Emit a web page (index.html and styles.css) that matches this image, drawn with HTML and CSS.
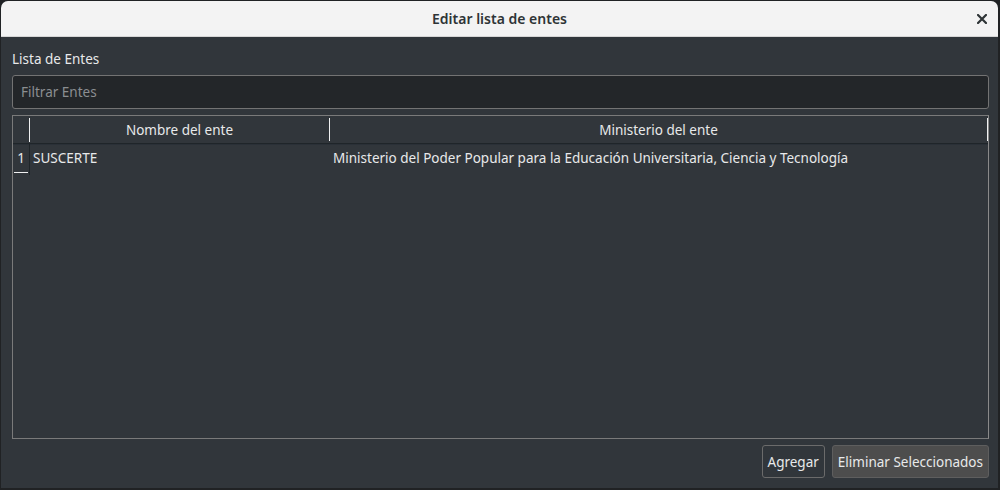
FILE: index.html
```html
<!DOCTYPE html>
<html lang="es">
<head>
<meta charset="utf-8">
<title>Editar lista de entes</title>
<link rel="stylesheet" href="styles.css">
</head>
<body>
<div class="window">
  <div class="titlebar">
    <span class="title">Editar lista de entes</span>
    <span class="close">
      <svg width="10" height="10" viewBox="0 0 10 10"><path d="M1 1L9 9M9 1L1 9" stroke="#2e3436" stroke-width="2.2" stroke-linecap="square"/></svg>
    </span>
  </div>
  <div class="content">
    <div class="label">Lista de Entes</div>
    <div class="filter">Filtrar Entes</div>
    <div class="table">
      <div class="thead">
        <div class="corner"></div>
        <div class="th th-name">Nombre del ente</div>
        <div class="th th-min">Ministerio del ente</div>
      </div>
      <div class="row">
        <div class="rownum"><span>1</span></div>
        <div class="td td-name">SUSCERTE</div>
        <div class="td td-min">Ministerio del Poder Popular para la Educación Universitaria, Ciencia y Tecnología</div>
      </div>
    </div>
    <div class="actions">
      <button class="btn">Agregar</button>
      <button class="btn btn-alt">Eliminar Seleccionados</button>
    </div>
  </div>
</div>
</body>
</html>
```

FILE: styles.css
```css
html, body {
  margin: 0;
  padding: 0;
  background: #202224;
  font-family: "Noto Sans", "DejaVu Sans", sans-serif;
}
.window {
  margin: 1px 2px 0 1px;
  height: 487px;
  display: flex;
  flex-direction: column;
  background: #31363b;
  border-radius: 7px 7px 0 0;
  overflow: hidden;
}
.titlebar {
  height: 35px;
  background: #f3f3f3;
  border-bottom: 1px solid #d6d6d6;
  display: flex;
  align-items: center;
  justify-content: center;
  position: relative;
  flex: none;
}
.title {
  font-size: 14px;
  font-weight: 600;
  color: #2e3436;
}
.close {
  position: absolute;
  right: 11px;
  top: 13px;
  width: 10px;
  height: 10px;
  display: flex;
}
.content {
  flex: 1;
  display: flex;
  flex-direction: column;
  padding: 13px 9px 10px 11px;
  color: #e8e9ea;
  font-size: 13.5px;
}
.label {
  height: 25px;
  line-height: 18px;
}
.filter {
  height: 32px;
  border: 1px solid #737373;
  border-radius: 3px;
  background: #232629;
  color: #8b8e91;
  padding-left: 8px;
  line-height: 32px;
  margin-bottom: 6px;
}
.table {
  height: 322px;
  border: 1px solid #7a7a7a;
  border-right-color: #8a8a8a;
  display: flex;
  flex-direction: column;
}
.thead {
  height: 27px;
  display: flex;
  border-bottom: 1px solid #1f2529;
  box-shadow: 0 1px 0 #2a3037;
}
.corner {
  width: 16px;
  border-right: 1px solid #eff0f1;
  margin: 2px 0 1px 0;
}
.th {
  display: flex;
  align-items: center;
  justify-content: center;
  height: 23px;
  margin-top: 2px;
}
.th-name {
  width: 299px;
  border-right: 1px solid #eff0f1;
}
.th-min {
  flex: 1;
  border-right: 1px solid #eff0f1;
}
.row {
  display: flex;
  height: 31px;
}
.rownum {
  width: 16px;
  border-right: 1px solid #1f2529;
  display: flex;
  align-items: flex-start;
  justify-content: center;
}
.rownum span {
  display: block;
  line-height: 18px;
  border-bottom: 1px solid #eff0f1;
  padding: 0 3px 5px 3px;
  margin-top: 5px;
}
.td {
  display: flex;
  align-items: center;
  padding-left: 3px;
  padding-bottom: 4px;
}
.td-name {
  width: 297px;
}
.td-min {
  flex: 1;
}
.actions {
  display: flex;
  justify-content: flex-end;
  gap: 7px;
  margin-top: 6px;
}
.btn {
  font-family: inherit;
  font-size: 13.5px;
  color: #e8e9ea;
  background: #31363b;
  border: 1px solid #6b6b6b;
  border-radius: 3px;
  height: 33px;
  padding: 0 5px;
}
.btn-alt {
  background: #4d4d4d;
  border-color: #5e5e5e;
}
```
